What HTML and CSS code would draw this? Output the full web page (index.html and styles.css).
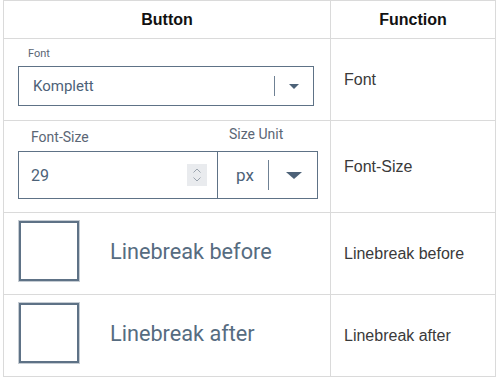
FILE: index.html
```html
<!DOCTYPE html>
<html lang="en">
<head>
    <meta charset="UTF-8">
    <meta name="viewport" content="width=device-width, initial-scale=1.0">
    <title>Toolbar Buttons</title>
    <link rel="stylesheet" href="styles.css">
</head>
<body>
    <table class="button-table">
        <thead>
            <tr>
                <th class="col-button">Button</th>
                <th class="col-function">Function</th>
            </tr>
        </thead>
        <tbody>
            <tr class="row-font">
                <td class="widget-cell">
                    <div class="field-label small">Font</div>
                    <div class="select font-select">
                        <span class="select-value">Komplett</span>
                        <span class="select-divider"></span>
                        <span class="select-arrow"></span>
                    </div>
                </td>
                <td>Font</td>
            </tr>
            <tr class="row-size">
                <td class="widget-cell">
                    <div class="size-labels">
                        <div class="field-label size-label">Font-Size</div>
                        <div class="field-label unit-label">Size Unit</div>
                    </div>
                    <div class="size-group">
                        <div class="number-input">
                            <span class="number-value">29</span>
                            <span class="spinner">
                                <svg width="10" height="16" viewBox="0 0 10 16">
                                    <path d="M1.5 5.5 L5 2 L8.5 5.5" fill="none" stroke="#9aa3ad" stroke-width="1"/>
                                    <path d="M1.5 10.5 L5 14 L8.5 10.5" fill="none" stroke="#9aa3ad" stroke-width="1"/>
                                </svg>
                            </span>
                        </div>
                        <div class="select unit-select">
                            <span class="select-value">px</span>
                            <span class="select-divider"></span>
                            <span class="select-arrow big"></span>
                        </div>
                    </div>
                </td>
                <td>Font-Size</td>
            </tr>
            <tr class="row-check">
                <td class="widget-cell">
                    <div class="check-row">
                        <span class="checkbox"></span>
                        <span class="check-label">Linebreak before</span>
                    </div>
                </td>
                <td>Linebreak before</td>
            </tr>
            <tr class="row-check">
                <td class="widget-cell">
                    <div class="check-row">
                        <span class="checkbox"></span>
                        <span class="check-label">Linebreak after</span>
                    </div>
                </td>
                <td>Linebreak after</td>
            </tr>
        </tbody>
    </table>
</body>
</html>
```

FILE: styles.css
```css
body {
    margin: 0;
    padding: 0;
    background-color: #ffffff;
    font-family: "Liberation Sans", Arial, sans-serif;
}
.button-table {
    margin-left: 3px;
    width: 493px;
    border-collapse: collapse;
    table-layout: fixed;
}
.button-table th, .button-table td {
    border: 1px solid #dadada;
    padding: 0;
}
.button-table th {
    height: 37px;
    font-size: 16px;
    font-weight: bold;
    color: #111;
    text-align: center;
}
.col-button {
    width: 326px;
}
.button-table td {
    font-size: 16px;
    color: #3a3a3a;
    padding-left: 13px;
    vertical-align: middle;
}
.button-table td.widget-cell {
    padding-left: 14px;
    vertical-align: top;
    font-family: Roboto, sans-serif;
    color: #4d6278;
}
.row-font td {
    height: 81px;
}
.row-size td {
    height: 91px;
}
.row-check td {
    height: 81px;
}
.field-label {
    color: #5b6675;
    font-size: 14px;
}
.field-label.small {
    font-size: 11px;
    margin-top: 8px;
    margin-left: 10px;
    line-height: 13px;
}
.select {
    display: flex;
    align-items: center;
    border: 1px solid #5e7286;
    box-sizing: border-box;
    background: #fff;
}
.font-select {
    margin-top: 6px;
    width: 296px;
    height: 40px;
    padding-left: 14px;
}
.select-value {
    flex: 1;
    font-size: 15px;
    color: #4d6278;
}
.select-divider {
    width: 1px;
    height: 20px;
    background: #6f8194;
}
.select-arrow {
    width: 0;
    height: 0;
    margin: 0 14px 0 14px;
    border-left: 5px solid transparent;
    border-right: 5px solid transparent;
    border-top: 5px solid #4d6278;
}
.select-arrow.big {
    margin: 0 15px 0 17px;
    border-left: 8px solid transparent;
    border-right: 8px solid transparent;
    border-top: 7px solid #4d6278;
}
.size-labels {
    display: flex;
    margin-top: 3px;
    line-height: 20px;
}
.size-label {
    width: 199px;
    padding-left: 13px;
    margin-top: 3px;
    box-sizing: border-box;
}
.unit-label {
    padding-left: 12px;
}
.size-group {
    display: flex;
    margin-top: 4px;
    width: 300px;
    height: 48px;
    border: 1px solid #5e7286;
    box-sizing: border-box;
}
.number-input {
    display: flex;
    align-items: center;
    width: 199px;
    padding-left: 12px;
    border-right: 1px solid #5e7286;
    box-sizing: border-box;
}
.number-value {
    flex: 1;
    font-size: 16px;
    color: #4d6278;
}
.spinner {
    display: flex;
    align-items: center;
    justify-content: center;
    width: 20px;
    height: 22px;
    margin-right: 10px;
    background: #e9ebee;
}
.unit-select {
    flex: 1;
    border: none;
    padding-left: 18px;
}
.unit-select .select-value {
    font-size: 17px;
}
.unit-select .select-divider {
    height: 30px;
}
.check-row {
    display: flex;
    align-items: center;
    margin-top: 8px;
    margin-left: 1px;
}
.checkbox {
    width: 56px;
    height: 56px;
    border: 2px solid #5e7286;
    box-shadow: 0 0 0 1px #c5ccd3;
}
.check-label {
    margin-left: 31px;
    font-size: 21.7px;
    color: #566c81;
}
```
